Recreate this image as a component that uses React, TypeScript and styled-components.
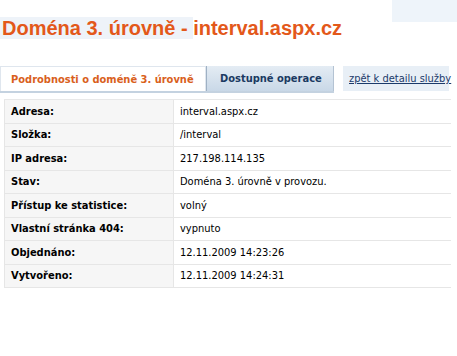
import styled, { createGlobalStyle } from "styled-components";

const GlobalStyle = createGlobalStyle`
  html, body {
    margin: 0;
    padding: 0;
    background: #ffffff;
  }
  body {
    font-family: "DejaVu Sans Condensed", "DejaVu Sans", "Liberation Sans", sans-serif;
    font-size: 11px;
    color: #000;
  }
`

const Page = styled.div`
  width: 457px;
  height: 356px;
  overflow: hidden;
`

const TopStrip = styled.div`
  display: flex;
  justify-content: flex-end;
  height: 17px;
`

const Shade = styled.div`
  width: 65px;
  height: 22px;
  background: #eef4fa;
`

const Title = styled.h1`
  margin: 0;
  padding-left: 2px;
  height: 22px;
  line-height: 22px;
  font-family: "Liberation Sans", Arial, sans-serif;
  font-size: 20px;
  font-weight: bold;
  color: #e3581a;
  white-space: nowrap;
`

const TitleShade = styled.span`
  background: #eef3f9;
  margin-left: -2px;
  padding-left: 2px;
`

const TabRow = styled.div`
  display: flex;
  align-items: flex-start;
  margin-top: 27px;
`

const TabBar = styled.div`
  display: flex;
  align-items: stretch;
  height: 25px;
  border-bottom: 2px solid #c4d2e0;
  width: 334px;
`

const Tab = styled.div<{ $active?: boolean }>`
  display: flex;
  align-items: center;
  box-sizing: border-box;
  font-weight: bold;
  white-space: nowrap;
  ${p => p.$active ? `
    width: 206px;
    padding-left: 10px;
    background: #ffffff;
    border: 1px solid #dfe6ee;
    border-bottom: none;
    color: #d9601c;
  ` : `
    width: 128px;
    padding-left: 13px;
    background: linear-gradient(#e4ecf4, #c9d8e7);
    border-left: 1px solid #9fb1c4;
    border-right: 1px solid #b4c3d3;
    color: #1b3a62;
  `}
`

const BackLink = styled.a`
  display: flex;
  align-items: center;
  box-sizing: border-box;
  height: 25px;
  margin-left: 9px;
  width: 106px;
  padding-left: 6px;
  background: #e8eff6;
  color: #1b3a6a;
  text-decoration: underline;
  white-space: nowrap;
  cursor: pointer;
`

const Table = styled.div`
  margin: 6px 0 0 4px;
  width: 447px;
  border-top: 1px solid #e8e8e8;
`

const Row = styled.div`
  display: grid;
  grid-template-columns: 170px 1fr;
  height: 23.5px;
  box-sizing: border-box;
  border-bottom: 1px solid #e6e6e6;
`

const Label = styled.div`
  display: flex;
  align-items: center;
  padding-left: 6px;
  background: #f6f6f6;
  border-left: 1px solid #e6e6e6;
  border-right: 1px solid #e6e6e6;
  font-weight: bold;
  white-space: nowrap;
`

const Value = styled.div`
  display: flex;
  align-items: center;
  padding-left: 6px;
  background: #ffffff;
  white-space: nowrap;
`

const rows: [string, string][] = [
  ["Adresa:", "interval.aspx.cz"],
  ["Složka:", "/interval"],
  ["IP adresa:", "217.198.114.135"],
  ["Stav:", "Doména 3. úrovně v provozu."],
  ["Přístup ke statistice:", "volný"],
  ["Vlastní stránka 404:", "vypnuto"],
  ["Objednáno:", "12.11.2009 14:23:26"],
  ["Vytvořeno:", "12.11.2009 14:24:31"],
]

export default function App() {
  return (
    <Page>
      <GlobalStyle />
      <TopStrip><Shade /></TopStrip>
      <Title><TitleShade>Doména 3. úrovně - </TitleShade>interval.aspx.cz</Title>
      <TabRow>
        <TabBar>
          <Tab $active>Podrobnosti o doméně 3. úrovně</Tab>
          <Tab>Dostupné operace</Tab>
        </TabBar>
        <BackLink>zpět k detailu služby</BackLink>
      </TabRow>
      <Table>
        {rows.map(([label, value]) => (
          <Row key={label}>
            <Label>{label}</Label>
            <Value>{value}</Value>
          </Row>
        ))}
      </Table>
    </Page>
  )
}
